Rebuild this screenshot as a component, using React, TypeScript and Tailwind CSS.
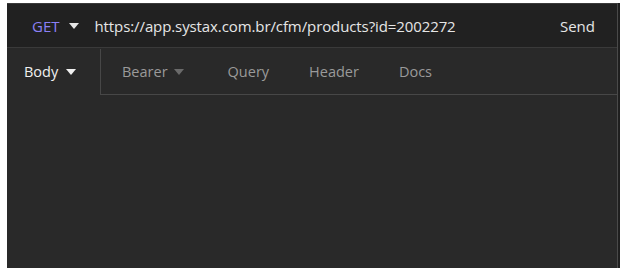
import React from "react";

const Caret = ({ className = "" }: { className?: string }) => (
  <svg width="10" height="6" viewBox="0 0 10 6" className={className}>
    <path d="M0 0h10L5 6z" fill="currentColor" />
  </svg>
);

const tabs = ["Query", "Header", "Docs"];

export default function App() {
  return (
    <div
      className="w-[627px] h-[277px] bg-white pt-[3px] pl-[7px]"
      style={{ fontFamily: '"Open Sans", "Noto Sans", sans-serif' }}
    >
      <div className="flex w-[613px] h-[265px] bg-[#1f1f1f]">
        <div className="flex flex-col w-[611px] border-r border-[#4a4a4a] border-t border-t-[#3a3a3a]">
          {/* url bar */}
          <div className="flex items-center h-[44px] pt-[1px] bg-[#212121] border-b border-[#3a3a3a] text-[15px]">
            <div className="flex items-center gap-[9px] pl-[25px] text-[#8b80f5]">
              GET
              <Caret className="text-[#e6e6e6]" />
            </div>
            <div className="ml-[16px] text-[#e6e6e6] flex-1 tracking-[-0.1px]">
              https://app.systax.com.br/cfm/products?id=2002272
            </div>
            <div className="pr-[22px] text-[#e6e6e6]">Send</div>
          </div>

          {/* tabs */}
          <div className="flex h-[47px] pt-[1px] bg-[#292929] text-[14.5px]">
            <div className="flex items-center gap-[8px] w-[94px] pl-[17px] border-r border-[#474747] text-[#f0f0f0]">
              Body
              <Caret className="text-[#f0f0f0]" />
            </div>
            <div className="flex flex-1 border-b border-[#474747] text-[#9a9a9a]">
              <div className="flex items-center gap-[6px] pl-[21px] pr-[24px]">
                Bearer
                <Caret className="text-[#6a6a6a]" />
              </div>
              {tabs.map((t) => (
                <div key={t} className="flex items-center px-[20px]">
                  {t}
                </div>
              ))}
            </div>
          </div>

          <div className="flex-1 bg-[#292929]" />
        </div>
      </div>
    </div>
  );
}
